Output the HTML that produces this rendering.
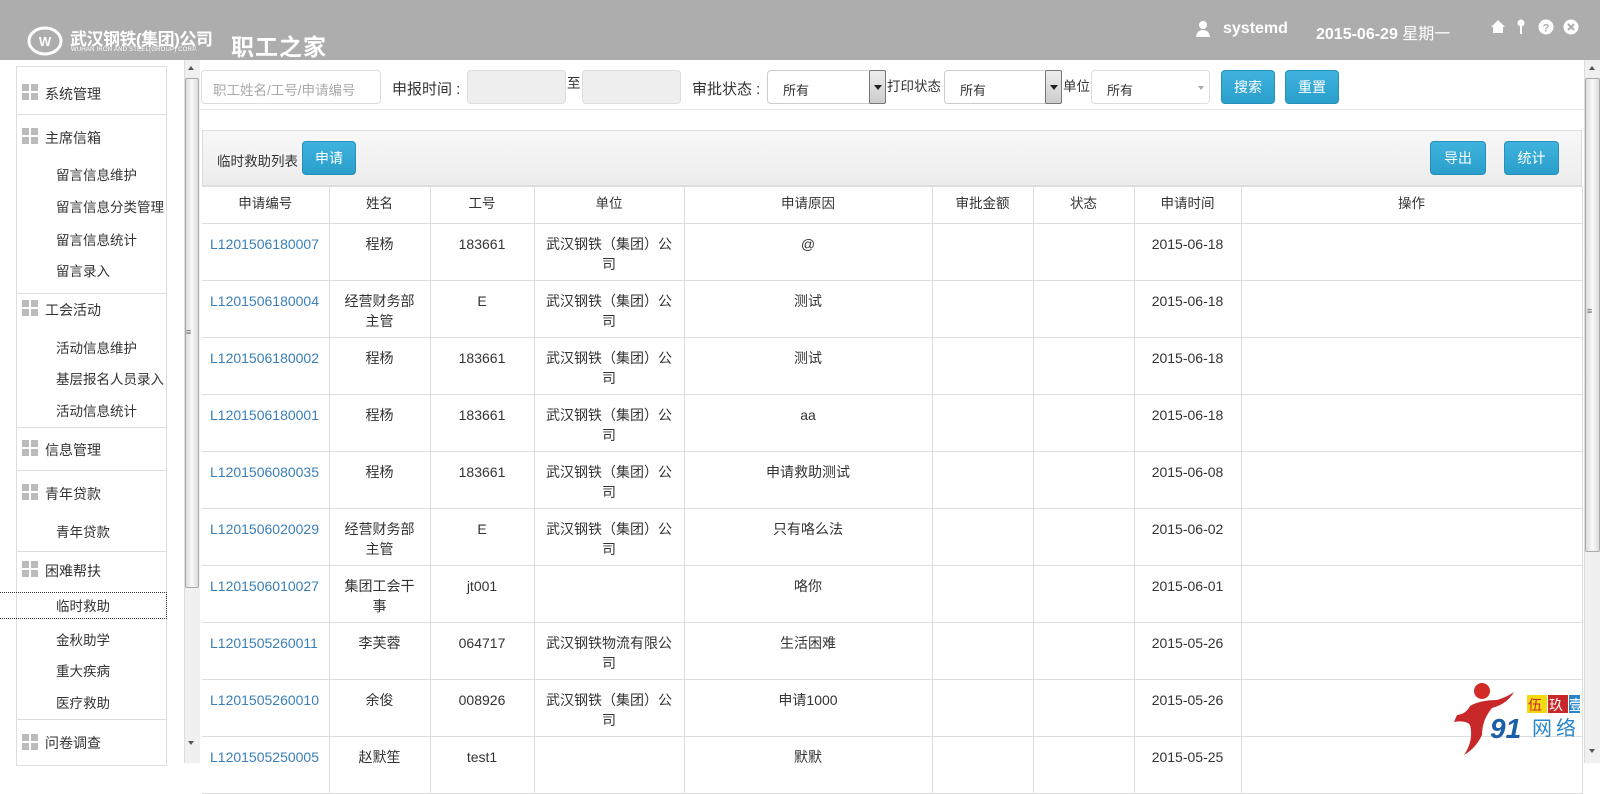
<!DOCTYPE html>
<html><head><meta charset="utf-8"><style>
*{margin:0;padding:0;box-sizing:border-box}
body{width:1600px;height:763px;overflow:hidden;background:#fff;font-family:"Liberation Sans","Noto Sans CJK SC",sans-serif;font-size:13px;color:#333;position:relative}
.a{position:absolute}
#hd{left:0;top:0;width:1600px;height:60px;background:#adadad;color:#fff}
.side{left:16px;top:66px;width:151px;height:700px;border:1px solid #ddd;border-top:1px solid #ddd}
.sg{position:absolute;left:22px;width:16px;height:16px}
.sg i{position:absolute;width:7px;height:7px;background:#bbb}
.sl{left:16px;width:151px;height:1px;background:#ddd}
.st{font-size:14px;color:#333}
.ss{font-size:13.5px;color:#333;left:56px}
.vsb{width:16px;background:#f0f0f0;border-left:1px solid #ddd}
.thumb{background:linear-gradient(90deg,#ddd,#f8f8f8,#ddd);border:1px solid #aaa;border-radius:2px}
.in{border:1px solid #ddd;border-radius:4px;background:#fff;height:34px;top:70px}
.dis{background:#eee}
.lab{top:78px;font-size:15px;color:#333}
.lab2{top:75px;font-size:13.5px;color:#333}
.sel{border:1px solid #ccc;border-radius:4px;background:#fff;height:34px;top:70px;font-size:13px;padding:9px 0 0 15px}
.arr{position:absolute;right:-1px;top:-1px;width:17px;height:34px;background:linear-gradient(#eee,#ccc);border:1px solid #777;border-radius:2px}
.arr:after{content:"";position:absolute;left:4px;top:14px;border:4px solid transparent;border-top:5px solid #222}
.btn{background:linear-gradient(#3fb3de,#2a9fcb);border:1px solid #2490bb;border-radius:4px;color:#fff;font-size:14px;text-align:center;line-height:32px;height:34px}
table{position:absolute;left:202px;top:186px;border-collapse:collapse;table-layout:fixed;width:1380px}
td{border:1px solid #ddd;text-align:center;vertical-align:top;padding:10px 10px 0;line-height:20px;font-size:14px;color:#333;height:57px}
tr.h td{height:37px;padding-top:7px;font-size:13.5px}
td.l{color:#3a7fb8;text-align:left;padding-left:8px;padding-right:0}
tr td:first-child{border-left:none}
</style></head><body>
<div id="hd" class="a">
 <svg class="a" style="left:27px;top:26px" width="36" height="30" viewBox="0 0 36 30"><ellipse cx="18" cy="15" rx="16" ry="13" fill="none" stroke="#fff" stroke-width="3"/><text x="18" y="20" font-size="13" font-weight="bold" fill="#fff" text-anchor="middle" font-family="Liberation Sans">W</text></svg>
 <div class="a" style="left:70px;top:25px;font-size:17px;font-weight:bold;letter-spacing:-0.5px">武汉钢铁(集团)公司</div>
 <div class="a" style="left:71px;top:47px;font-size:6px;letter-spacing:0.2px">WUHAN IRON AND STEEL(GROUP) CORP.</div>
 <div class="a" style="left:231px;top:28px;font-size:23px;font-weight:bold;letter-spacing:1px">职工之家</div>
 <svg class="a" style="left:1195px;top:20px" width="16" height="18" viewBox="0 0 16 18"><circle cx="8" cy="5" r="4" fill="#fff"/><path d="M1 17 Q2 10 8 10 Q14 10 15 17Z" fill="#fff"/></svg>
 <div class="a" style="left:1223px;top:20px;font-size:16px;font-weight:bold">systemd</div>
 <div class="a" style="left:1316px;top:20px;font-size:16px;font-weight:bold">2015-06-29 <span style="font-weight:normal">星期一</span></div>
 <svg class="a" style="left:1490px;top:18px" width="90" height="20" viewBox="0 0 90 20"><path d="M1 9 L8 2 L15 9 H13 V15 H3 V9Z" fill="#fff"/><circle cx="31" cy="5" r="3.5" fill="#fff"/><rect x="30" y="7" width="2" height="9" fill="#fff"/><circle cx="56" cy="9" r="7.5" fill="#fff"/><text x="56" y="13.5" font-size="11" font-weight="bold" fill="#adadad" text-anchor="middle" font-family="Liberation Sans">?</text><circle cx="81" cy="9" r="7.5" fill="#fff"/><path d="M78 6 L84 12 M84 6 L78 12" stroke="#adadad" stroke-width="2"/></svg>
</div>

<div class="a side"></div>
<div class="a vsb" style="left:184px;top:60px;height:703px"></div>
<div class="a thumb" style="left:185px;top:78px;width:14px;height:510px"></div>
<div class="a" style="left:186px;top:327px;font-size:9px;color:#666">≡</div>
<div class="a" style="left:188px;top:63px;border:3px solid transparent;border-bottom:4px solid #555"></div>
<div class="a" style="left:188px;top:741px;border:3px solid transparent;border-top:4px solid #555"></div>

<div class="sg" style="top:84px"><i style="left:0;top:0"></i><i style="left:9px;top:0"></i><i style="left:0;top:9px"></i><i style="left:9px;top:9px"></i></div>
<div class="a st" style="left:45px;top:84px">系统管理</div>
<div class="a sl" style="top:114px"></div>
<div class="sg" style="top:128px"><i style="left:0;top:0"></i><i style="left:9px;top:0"></i><i style="left:0;top:9px"></i><i style="left:9px;top:9px"></i></div>
<div class="a st" style="left:45px;top:128px">主席信箱</div>
<div class="a ss" style="top:164px">留言信息维护</div>
<div class="a ss" style="top:196px">留言信息分类管理</div>
<div class="a ss" style="top:229px">留言信息统计</div>
<div class="a ss" style="top:260px">留言录入</div>
<div class="a sl" style="top:293px"></div>
<div class="sg" style="top:300px"><i style="left:0;top:0"></i><i style="left:9px;top:0"></i><i style="left:0;top:9px"></i><i style="left:9px;top:9px"></i></div>
<div class="a st" style="left:45px;top:300px">工会活动</div>
<div class="a ss" style="top:337px">活动信息维护</div>
<div class="a ss" style="top:368px">基层报名人员录入</div>
<div class="a ss" style="top:400px">活动信息统计</div>
<div class="a sl" style="top:427px"></div>
<div class="sg" style="top:440px"><i style="left:0;top:0"></i><i style="left:9px;top:0"></i><i style="left:0;top:9px"></i><i style="left:9px;top:9px"></i></div>
<div class="a st" style="left:45px;top:440px">信息管理</div>
<div class="a sl" style="top:470px"></div>
<div class="sg" style="top:484px"><i style="left:0;top:0"></i><i style="left:9px;top:0"></i><i style="left:0;top:9px"></i><i style="left:9px;top:9px"></i></div>
<div class="a st" style="left:45px;top:484px">青年贷款</div>
<div class="a ss" style="top:521px">青年贷款</div>
<div class="a sl" style="top:551px"></div>
<div class="sg" style="top:561px"><i style="left:0;top:0"></i><i style="left:9px;top:0"></i><i style="left:0;top:9px"></i><i style="left:9px;top:9px"></i></div>
<div class="a st" style="left:45px;top:561px">困难帮扶</div>
<div class="a" style="left:0;top:592px;width:167px;height:27px;border:1px dotted #333;border-left:none"></div>
<div class="a ss" style="top:595px">临时救助</div>
<div class="a ss" style="top:629px">金秋助学</div>
<div class="a ss" style="top:660px">重大疾病</div>
<div class="a ss" style="top:692px">医疗救助</div>
<div class="a sl" style="top:719px"></div>
<div class="sg" style="top:734px"><i style="left:0;top:0"></i><i style="left:9px;top:0"></i><i style="left:0;top:9px"></i><i style="left:9px;top:9px"></i></div>
<div class="a st" style="left:45px;top:733px">问卷调查</div>

<div class="a vsb" style="left:1584px;top:60px;height:703px"></div>
<div class="a thumb" style="left:1585px;top:78px;width:15px;height:474px"></div>
<div class="a" style="left:1587px;top:306px;font-size:9px;color:#666">≡</div>
<div class="a" style="left:1589px;top:63px;border:3px solid transparent;border-bottom:4px solid #555"></div>
<div class="a" style="left:1589px;top:749px;border:3px solid transparent;border-top:4px solid #555"></div>

<div class="a in" style="left:201px;width:180px;color:#aaa;font-size:13.5px;padding:8px 0 0 11px">职工姓名/工号/申请编号</div>
<div class="a lab" style="left:392px">申报时间 :</div>
<div class="a in dis" style="left:467px;width:99px"></div>
<div class="a lab2" style="left:567px;top:72px">至</div>
<div class="a in dis" style="left:582px;width:99px"></div>
<div class="a lab" style="left:692px">审批状态 :</div>
<div class="a sel" style="left:767px;width:119px">所有<div class="arr"></div></div>
<div class="a lab2" style="left:887px">打印状态</div>
<div class="a sel" style="left:944px;width:118px">所有<div class="arr"></div></div>
<div class="a lab2" style="left:1063px">单位</div>
<div class="a sel dis" style="left:1091px;width:119px;border-color:#ddd">所有<div style="position:absolute;right:5px;top:15px;border:3px solid transparent;border-top:4px solid #aaa"></div></div>
<div class="a btn" style="left:1221px;top:70px;width:54px">搜索</div>
<div class="a btn" style="left:1285px;top:70px;width:54px">重置</div>
<div class="a" style="left:200px;top:109px;width:1384px;height:1px;background:#e5e5e5"></div>

<div class="a" style="left:202px;top:130px;width:1380px;height:56px;background:linear-gradient(#f8f8f8,#ececec);border:1px solid #ddd"></div>
<div class="a" style="left:217px;top:150px;font-size:13.5px">临时救助列表</div>
<div class="a btn" style="left:302px;top:141px;width:54px">申请</div>
<div class="a btn" style="left:1430px;top:141px;width:56px">导出</div>
<div class="a btn" style="left:1504px;top:141px;width:55px">统计</div>

<table>
<colgroup><col style="width:127px"><col style="width:101px"><col style="width:104px"><col style="width:150px"><col style="width:248px"><col style="width:101px"><col style="width:101px"><col style="width:107px"><col style="width:341px"></colgroup>
<tr class="h"><td>申请编号</td><td>姓名</td><td>工号</td><td>单位</td><td>申请原因</td><td>审批金额</td><td>状态</td><td>申请时间</td><td>操作</td></tr>
<tr><td class="l">L1201506180007</td><td>程杨</td><td>183661</td><td>武汉钢铁（集团）公司</td><td>@</td><td></td><td></td><td>2015-06-18</td><td></td></tr>
<tr><td class="l">L1201506180004</td><td>经营财务部主管</td><td>E</td><td>武汉钢铁（集团）公司</td><td>测试</td><td></td><td></td><td>2015-06-18</td><td></td></tr>
<tr><td class="l">L1201506180002</td><td>程杨</td><td>183661</td><td>武汉钢铁（集团）公司</td><td>测试</td><td></td><td></td><td>2015-06-18</td><td></td></tr>
<tr><td class="l">L1201506180001</td><td>程杨</td><td>183661</td><td>武汉钢铁（集团）公司</td><td>aa</td><td></td><td></td><td>2015-06-18</td><td></td></tr>
<tr><td class="l">L1201506080035</td><td>程杨</td><td>183661</td><td>武汉钢铁（集团）公司</td><td>申请救助测试</td><td></td><td></td><td>2015-06-08</td><td></td></tr>
<tr><td class="l">L1201506020029</td><td>经营财务部主管</td><td>E</td><td>武汉钢铁（集团）公司</td><td>只有咯么法</td><td></td><td></td><td>2015-06-02</td><td></td></tr>
<tr><td class="l">L1201506010027</td><td>集团工会干事</td><td>jt001</td><td></td><td>咯你</td><td></td><td></td><td>2015-06-01</td><td></td></tr>
<tr><td class="l">L1201505260011</td><td>李芙蓉</td><td>064717</td><td>武汉钢铁物流有限公司</td><td>生活困难</td><td></td><td></td><td>2015-05-26</td><td></td></tr>
<tr><td class="l">L1201505260010</td><td>余俊</td><td>008926</td><td>武汉钢铁（集团）公司</td><td>申请1000</td><td></td><td></td><td>2015-05-26</td><td></td></tr>
<tr><td class="l">L1201505250005</td><td>赵默笙</td><td>test1</td><td></td><td>默默</td><td></td><td></td><td>2015-05-25</td><td></td></tr>
</table>

<svg class="a" style="left:1452px;top:680px" width="128" height="80" viewBox="0 0 128 80">
<circle cx="30" cy="11" r="8" fill="#d42a25"/>
<path d="M5 35 Q14 34 18 26 Q28 20 45 20 Q55 17 62 12 Q55 24 40 28 Q30 40 30 55 Q24 68 12 75 Q22 60 18 45 Q14 40 2 42Z" fill="#c8282a"/>
<text x="38" y="58" font-size="28" font-weight="bold" font-style="italic" fill="#1a5fa8" font-family="Liberation Sans">91</text>
<rect x="75" y="15" width="20" height="18" fill="#f5d90f"/><rect x="96" y="15" width="20" height="18" fill="#c8282a"/><rect x="117" y="15" width="11" height="18" fill="#2a86c8"/>
<text x="76" y="30" font-size="14" fill="#c8282a" font-family="Noto Sans CJK SC">伍</text>
<text x="97" y="30" font-size="14" fill="#fff" font-family="Noto Sans CJK SC">玖</text>
<text x="117" y="30" font-size="14" fill="#fff" font-family="Noto Sans CJK SC">壹</text>
<text x="80" y="55" font-size="20" fill="#2a86c8" letter-spacing="4" font-family="Noto Sans CJK SC">网络</text>
</svg>
</body></html>
